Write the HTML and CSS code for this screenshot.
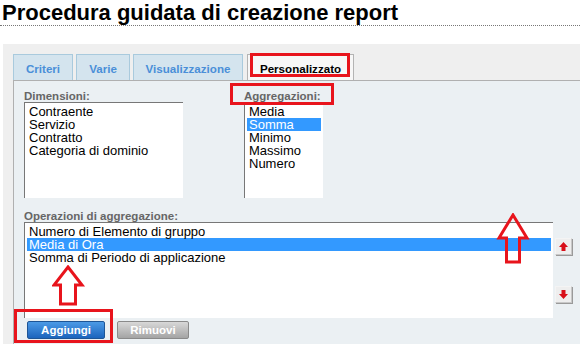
FILE: index.html
```html
<!DOCTYPE html>
<html lang="it">
<head>
  <meta charset="UTF-8">
  <title>Procedura guidata di creazione report</title>
  <link rel="stylesheet" href="styles.css">
</head>
<body>
  <h1 class="title">Procedura guidata di creazione report</h1>
  <div class="wizard">
    <div class="tabs">
      <div class="tab tab-criteri">Criteri</div>
      <div class="tab tab-varie">Varie</div>
      <div class="tab tab-vis">Visualizzazione</div>
      <div class="tab tab-active">Personalizzato</div>
    </div>
    <div class="panel">
      <div class="row-top">
        <div class="field field-dim">
          <div class="label">Dimensioni:</div>
          <div class="listbox list-dim">
            <div class="opt">Contraente</div>
            <div class="opt">Servizio</div>
            <div class="opt">Contratto</div>
            <div class="opt">Categoria di dominio</div>
          </div>
        </div>
        <div class="field field-agg">
          <div class="label">Aggregazioni:</div>
          <div class="listbox list-agg">
            <div class="opt">Media</div>
            <div class="opt selected">Somma</div>
            <div class="opt">Minimo</div>
            <div class="opt">Massimo</div>
            <div class="opt">Numero</div>
          </div>
        </div>
      </div>
      <div class="label label-ops">Operazioni di aggregazione:</div>
      <div class="row-ops">
        <div class="listbox list-ops">
          <div class="opt">Numero di Elemento di gruppo</div>
          <div class="opt selected">Media di Ora</div>
          <div class="opt">Somma di Periodo di applicazione</div>
        </div>
        <div class="movers">
          <div class="mover">
            <svg width="11" height="11" viewBox="0 0 11 11"><path d="M5.5 1 L10 6 L7.5 6 L7.5 10 L3.5 10 L3.5 6 L1 6 Z" fill="#d8101a"/></svg>
          </div>
          <div class="mover mover-down">
            <svg width="11" height="11" viewBox="0 0 11 11"><path d="M5.5 10 L10 5 L7.5 5 L7.5 1 L3.5 1 L3.5 5 L1 5 Z" fill="#d8101a"/></svg>
          </div>
        </div>
      </div>
      <div class="actions">
        <div class="btn btn-add">Aggiungi</div>
        <div class="btn btn-remove">Rimuovi</div>
      </div>
    </div>
  </div>

  <!-- annotazioni rosse sopra lo screenshot -->
  <div class="mark mark-tab"></div>
  <div class="mark mark-agg"></div>
  <div class="mark mark-add"></div>
  <svg class="arrow arrow-right" width="34" height="52" viewBox="0 0 34 52">
    <path d="M17 2 L31 25 L23.5 25 L23.5 49 L10.5 49 L10.5 25 L3 25 Z" fill="none" stroke="#e8141c" stroke-width="3"/>
  </svg>
  <svg class="arrow arrow-left" width="34" height="42" viewBox="0 0 34 42">
    <path d="M16 2 L30 20 L23.5 20 L23.5 39 L8.5 39 L8.5 20 L2 20 Z" fill="none" stroke="#e8141c" stroke-width="3"/>
  </svg>
</body>
</html>
```

FILE: styles.css
```css
body {
  margin: 0;
  background: #fff;
  font-family: "Liberation Sans", Arial, sans-serif;
  overflow: hidden;
}
.title {
  margin: 0;
  padding: 1px 0 0 2px;
  height: 24px;
  font-size: 22px;
  font-weight: bold;
  line-height: 24px;
  color: #000;
  border-bottom: 1px dotted #777;
}
.wizard {
  margin: 18px 0 0 3px;
  padding: 10px 0 0 10px;
  background: #efefef;
}
.tabs {
  display: flex;
  gap: 3px;
  height: 26px;
}
.tab {
  box-sizing: border-box;
  height: 26px;
  padding-top: 7px;
  text-align: center;
  font-size: 11.6px;
  font-weight: bold;
  color: #4a8fd8;
  background: #d4e4ee;
  border: 1px solid #a9cadd;
  border-bottom: none;
}
.tab-criteri { width: 60px; }
.tab-varie { width: 54px; }
.tab-vis { width: 110px; }
.tab-active {
  width: 107px;
  margin-left: 1px;
  color: #000;
  background: #f7f7f7;
  border-color: #b4b4b4;
}
.panel {
  border-top: 1px solid #b0b0b0;
  border-left: 1px solid #b0b0b0;
  background: #ebf0f3;
  padding: 9px 0 0 10px;
  height: 254px;
}
.row-top {
  display: flex;
  gap: 61px;
}
.label {
  font-size: 11.5px;
  font-weight: bold;
  color: #666;
  line-height: 12px;
  height: 12px;
}
.listbox {
  box-sizing: border-box;
  background: #fff;
  border-top: 1px solid #777;
  border-left: 1px solid #777;
  padding: 2px 2px 0 2px;
  height: 96px;
  font-size: 13px;
  line-height: 13px;
  color: #000;
}
.opt {
  padding-left: 2px;
  height: 13px;
  white-space: nowrap;
}
.opt.selected {
  background: #3399ff;
  color: #fff;
}
.list-dim { width: 159px; }
.list-agg { width: 79px; }
.label-ops {
  margin-top: 12px;
}
.row-ops {
  display: flex;
  gap: 2px;
}
.list-ops { width: 529px; }
.movers {
  padding-top: 16px;
}
.mover {
  box-sizing: border-box;
  width: 17px;
  height: 17px;
  background: #eeeeee;
  border: 1px solid #c8c8c8;
  border-top-color: #f4f4f4;
  border-left-color: #f4f4f4;
  box-shadow: 1px 1px 0 #9a9a9a;
  display: flex;
  align-items: center;
  justify-content: center;
}
.mover-down {
  margin-top: 31px;
}
.actions {
  display: flex;
  gap: 12px;
  margin: 3px 0 0 3px;
}
.btn {
  box-sizing: border-box;
  height: 18px;
  font-size: 11.5px;
  font-weight: bold;
  color: #fff;
  text-align: center;
  line-height: 16px;
  border-radius: 2px;
}
.btn-add {
  width: 78px;
  background: linear-gradient(#4c9ae6, #1c64bd);
  border: 1px solid #1e5596;
}
.btn-remove {
  width: 72px;
  background: linear-gradient(#d8d8d8, #a4a4a4);
  border: 1px solid #8a8a8a;
}
.mark {
  position: absolute;
  box-sizing: border-box;
  border: 3px solid #e8141c;
}
.mark-tab {
  left: 250px;
  top: 53px;
  width: 100px;
  height: 24px;
}
.mark-agg {
  left: 230px;
  top: 83px;
  width: 104px;
  height: 22px;
}
.mark-add {
  left: 14px;
  top: 309px;
  width: 99px;
  height: 34px;
}
.arrow {
  position: absolute;
}
.arrow-right {
  left: 496px;
  top: 213px;
}
.arrow-left {
  left: 52px;
  top: 265px;
}
```
